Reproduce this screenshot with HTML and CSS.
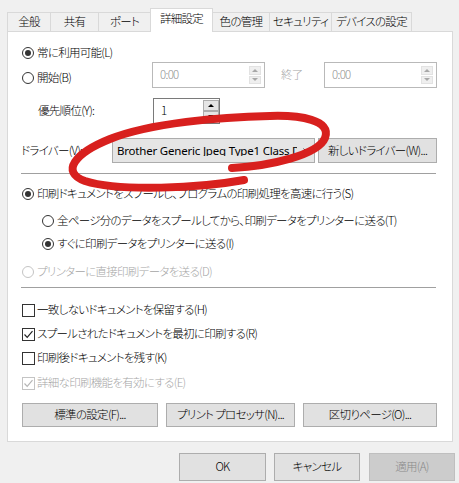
FILE: index.html
```html
<!DOCTYPE html>
<html lang="ja">
<head>
<meta charset="utf-8">
<title>プリンターのプロパティ - 詳細設定</title>
<link rel="stylesheet" href="styles.css">
</head>
<body>
<div class="dialog">
  <div class="tabs">
    <div class="tab t1">全般</div>
    <div class="tab t2">共有</div>
    <div class="tab t3">ポート</div>
    <div class="tab t4 active">詳細設定</div>
    <div class="tab t5">色の管理</div>
    <div class="tab t6">セキュリティ</div>
    <div class="tab t7">デバイスの設定</div>
  </div>

  <div class="panel">
    <div class="row avail">
      <span class="radio on"></span><span>常に利用可能(L)</span>
    </div>

    <div class="row start">
      <div class="opt"><span class="radio"></span><span>開始(B)</span></div>
      <div class="spin time">
        <span class="val">0:00</span>
        <span class="arrows"><i class="up"></i><i class="down"></i></span>
      </div>
      <span class="lbl-end">終了</span>
      <div class="spin time">
        <span class="val">0:00</span>
        <span class="arrows"><i class="up"></i><i class="down"></i></span>
      </div>
    </div>

    <div class="row prio">
      <span class="prio-label">優先順位(Y):</span>
      <div class="spin num">
        <span class="val">1</span>
        <span class="updown"><i class="up"></i><i class="down"></i></span>
      </div>
    </div>

    <div class="row driver">
      <span class="drv-label">ドライバー(V):</span>
      <div class="combo">
        <span class="combo-text">Brother Generic Jpeg Type1 Class Driver</span>
        <svg class="chev" width="8" height="5" viewBox="0 0 8 5"><polyline points="0.5,0.5 4,4 7.5,0.5" fill="none" stroke="#444" stroke-width="1"/></svg>
      </div>
      <div class="btn new-drv">新しいドライバー(W)...</div>
    </div>

    <div class="sep"></div>

    <div class="row opt-row s">
      <span class="radio on"></span><span>印刷ドキュメントをスプールし、プログラムの印刷処理を高速に行う(S)</span>
    </div>
    <div class="row opt-row sub t">
      <span class="radio"></span><span>全ページ分のデータをスプールしてから、印刷データをプリンターに送る(T)</span>
    </div>
    <div class="row opt-row sub i">
      <span class="radio on"></span><span>すぐに印刷データをプリンターに送る(I)</span>
    </div>
    <div class="row opt-row d disabled">
      <span class="radio"></span><span>プリンターに直接印刷データを送る(D)</span>
    </div>

    <div class="sep sep2"></div>

    <div class="row chk-row h">
      <span class="check"></span><span>一致しないドキュメントを保留する(H)</span>
    </div>
    <div class="row chk-row r">
      <span class="check"><svg width="11" height="11" viewBox="0 0 11 11"><polyline points="1.5,5.5 4.2,8.3 9.5,2.2" fill="none" stroke="#222" stroke-width="1.2"/></svg></span><span>スプールされたドキュメントを最初に印刷する(R)</span>
    </div>
    <div class="row chk-row k">
      <span class="check"></span><span>印刷後ドキュメントを残す(K)</span>
    </div>
    <div class="row chk-row e disabled">
      <span class="check"><svg width="11" height="11" viewBox="0 0 11 11"><polyline points="1.5,5.5 4.2,8.3 9.5,2.2" fill="none" stroke="#b5b5b5" stroke-width="1.2"/></svg></span><span>詳細な印刷機能を有効にする(E)</span>
    </div>

    <div class="btnrow">
      <div class="btn b-std">標準の設定(F)...</div>
      <div class="btn b-proc">プリント プロセッサ(N)...</div>
      <div class="btn b-sep">区切りページ(O)...</div>
    </div>
  </div>

  <div class="footer">
    <div class="btn f-ok">OK</div>
    <div class="btn f-cancel">キャンセル</div>
    <div class="btn f-apply">適用(A)</div>
  </div>
</div>

<svg class="scribble" width="459" height="483" viewBox="0 0 459 483">
  <path d="M 232 168 C 270 166, 318 155, 325 138 C 332 120, 300 115, 270 116 C 220 117, 150 123, 110 139 C 75 153, 60 172, 85 181 C 120 192, 200 188, 244 180" fill="none" stroke="#d8201e" stroke-width="8" stroke-linecap="round" stroke-linejoin="round"/>
</svg>
</body>
</html>
```

FILE: styles.css
```css
* { box-sizing: border-box; }
html, body { margin: 0; padding: 0; }
body {
  width: 459px;
  height: 483px;
  background: #f0f0f0;
  font-family: "Noto Sans CJK JP", "Noto Sans", sans-serif;
  font-size: 11.5px;
  font-weight: 300;
  letter-spacing: -0.7px;
  font-feature-settings: "palt";
  color: #000;
  position: relative;
  overflow: hidden;
}
.dialog { padding: 8px 6px 0 7px; }

/* tabs */
.tabs {
  display: flex;
  align-items: flex-end;
  height: 24px;
  margin-bottom: -1px;
  position: relative;
  z-index: 1;
}
.tab {
  height: 19px;
  margin-bottom: 1px;
  margin-left: -1px;
  border: 1px solid #d9d9d9;
  border-bottom: none;
  background: #f0f0f0;
  display: flex;
  align-items: center;
  justify-content: center;
  white-space: nowrap;
  line-height: 1;
}
.tab.t1 { margin-left: 0; width: 44px; }
.tab.t2 { width: 49px; }
.tab.t3 { width: 53px; }
.tab.t4 { width: 63px; }
.tab.t5 { width: 58px; }
.tab.t6 { width: 63px; }
.tab.t7 { width: 81px; }
.tab.active {
  height: 24px;
  margin-bottom: 0;
  background: #fff;
  position: relative;
  z-index: 2;
  padding-bottom: 3px;
}

/* panel */
.panel {
  height: 411px;
  background: #fff;
  border: 1px solid #d9d9d9;
  padding: 0 15px 0 13px;
}
.row { display: flex; align-items: center; white-space: nowrap; line-height: 1; }
.radio {
  width: 12px;
  height: 12px;
  border: 1px solid #333;
  border-radius: 50%;
  margin-left: 1px;
  margin-right: 3px;
  flex: none;
  display: flex;
  align-items: center;
  justify-content: center;
  background: #fff;
}
.radio.on::after {
  content: "";
  width: 6px;
  height: 6px;
  border-radius: 50%;
  background: #333;
}
.check {
  width: 13px;
  height: 13px;
  border: 1px solid #333;
  margin-left: 1px;
  margin-right: 2px;
  flex: none;
  display: flex;
  align-items: center;
  justify-content: center;
  background: #fff;
}
.disabled { color: #a6a6a6; }
.disabled .radio, .disabled .check { border-color: #c4c4c4; }

.avail { height: 18px; margin-top: 12px; }
.start { height: 26px; }
.opt { display: flex; align-items: center; width: 131px; margin-top: 6px; }

.spin {
  display: flex;
  align-items: center;
  justify-content: space-between;
  height: 26px;
  background: #fff;
}
.spin .val { padding-left: 7px; }
.time { width: 113px; border: 1px solid #b9b9b9; color: #8f8f8f; }
.arrows {
  width: 12px;
  height: 18px;
  margin-right: 3px;
  display: flex;
  flex-direction: column;
  gap: 1px;
}
.arrows i, .updown i {
  flex: 1;
  display: flex;
  align-items: center;
  justify-content: center;
  background: #efefef;
  border: 1px solid #e2e2e2;
}
.arrows i::after, .updown i::after {
  content: "";
  width: 0;
  height: 0;
  border-left: 3px solid transparent;
  border-right: 3px solid transparent;
}
.arrows .up::after { border-bottom: 3px solid #a8a8a8; }
.arrows .down::after { border-top: 3px solid #a8a8a8; }
.lbl-end { margin-left: 16px; width: 43px; color: #a6a6a6; }

.prio { height: 26px; margin-top: 10px; }
.prio-label { width: 132px; padding-left: 17px; }
.num { width: 67px; border: 1px solid #7a7a7a; align-items: stretch; }
.num .val { display: flex; align-items: center; }
.updown {
  width: 16px;
  display: flex;
  flex-direction: column;
  margin: 1px 0;
}
.updown i { background: #e5e5e5; border-color: #adadad; }
.updown .up::after { border-bottom: 3px solid #000; }
.updown .down::after { border-top: 3px solid #000; }

.driver { height: 25px; margin-top: 14px; }
.drv-label { width: 91px; }
.combo {
  width: 203px;
  height: 25px;
  background: #e5e5e5;
  border: 1px solid #acacac;
  display: flex;
  align-items: center;
  padding-left: 4px;
  font-family: "Noto Sans", "Noto Sans CJK JP", sans-serif;
  font-feature-settings: normal;
  font-weight: 400;
  letter-spacing: -0.2px;
}
.combo-text { width: 180px; overflow: hidden; white-space: nowrap; }
.chev { margin-left: 6px; flex: none; }

.btn {
  background: #e1e1e1;
  border: 1px solid #adadad;
  display: flex;
  align-items: center;
  justify-content: center;
  white-space: nowrap;
  line-height: 1;
}
.new-drv { width: 119px; height: 25px; margin-left: 3px; }

.sep { height: 1px; background: #a0a0a0; margin-top: 10px; margin-right: 1px; }
.sep2 { margin-top: 6px; }

.opt-row { height: 18px; }
.opt-row.s { margin-top: 11px; }
.opt-row.sub { padding-left: 20px; }
.opt-row.t { margin-top: 9px; }
.opt-row.i { margin-top: 5px; }
.opt-row.d { margin-top: 10px; }

.chk-row { height: 18px; }
.chk-row.h { margin-top: 13px; }
.chk-row.r { margin-top: 6px; }
.chk-row.k { margin-top: 6px; }
.chk-row.e { margin-top: 7px; }

.btnrow { display: flex; gap: 8px; height: 24px; margin-top: 11px; padding-left: 1px; }
.b-std { width: 136px; }
.b-proc { width: 129px; }
.b-sep { width: 134px; }

.footer {
  display: flex;
  justify-content: flex-end;
  gap: 8px;
  margin-top: 11px;
  margin-right: -2px;
}
.footer .btn { height: 28px; }
.f-ok { width: 87px; }
.f-cancel { width: 86px; }
.f-apply { width: 86px; margin-left: 1px; background: #cccccc; border-color: #bfbfbf; color: #8a8a8a; }

.scribble { position: absolute; left: 0; top: 0; pointer-events: none; }
```
